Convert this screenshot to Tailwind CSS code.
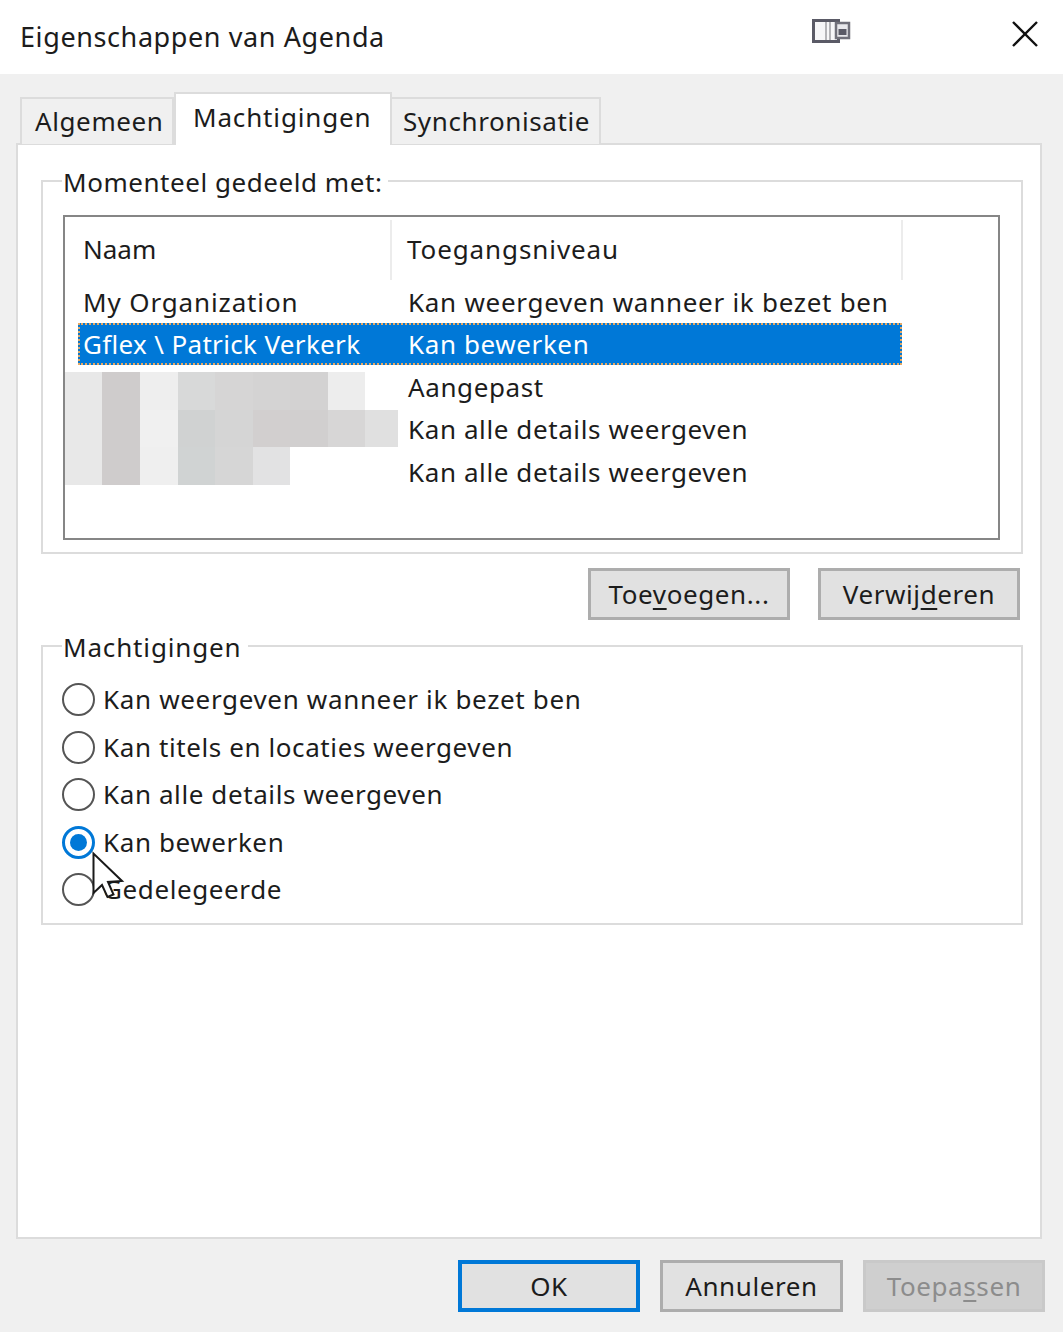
<!DOCTYPE html>
<html lang="nl">
<head>
    <meta charset="UTF-8">
    <title>Eigenschappen van Agenda</title>
    <script src="https://cdn.jsdelivr.net/npm/@tailwindcss/browser@4"></script>
</head>
<body class="bg-[#f0f0f0]">
<div class="relative w-[1063px] h-[1332px] overflow-hidden font-['Noto_Sans','Open_Sans',sans-serif] text-[26px] tracking-[0.6px] text-[#1c1c1c]">

    <!-- Title bar -->
    <div class="h-[74px] bg-white flex items-center pl-[20px] pr-[24px]">
        <span class="text-[27px] leading-none -mt-[2px]">Eigenschappen van Agenda</span>
        <svg class="ml-auto -mt-[12px]" width="40" height="26" viewBox="0 0 40 26">
            <rect x="2.5" y="2.5" width="25" height="21" fill="#f6f6f8" stroke="#5a5a66" stroke-width="3"/>
            <path d="M15 4v18M19 4v18" stroke="#b4b4b8" stroke-width="2"/>
            <rect x="25" y="5" width="13" height="15" fill="#e8e8ec" stroke="#70707a" stroke-width="2.5"/>
            <rect x="27.5" y="11" width="8" height="6" fill="#5a5a66"/>
        </svg>
        <svg class="ml-[160px] -mt-[6px]" width="28" height="28" viewBox="0 0 28 28">
            <path d="M2 2L26 26M26 2L2 26" stroke="#111" stroke-width="2.4"/>
        </svg>
    </div>

    <!-- Tabs -->
    <div class="flex items-end h-[51px] mt-[19px] pl-[20px] relative z-10 -mb-[1px]">
        <div class="w-[154px] h-[47px] bg-[#f0f0f0] border-2 border-b-0 border-[#dcdcdc] pl-[13px] flex items-center">Algemeen</div>
        <div class="w-[218px] h-[53px] -mb-[1px] bg-white border-2 border-b-0 border-[#dcdcdc] pl-[17px] pb-[4px] flex items-center tracking-[0.85px]">Machtigingen</div>
        <div class="w-[209px] h-[47px] bg-[#f0f0f0] border-2 border-b-0 border-l-0 border-[#dcdcdc] pl-[11px] flex items-center">Synchronisatie</div>
    </div>

    <!-- Panel -->
    <div class="ml-[16px] w-[1026px] h-[1096px] bg-white border-2 border-[#dcdcdc] pt-[35px] pl-[23px]">

        <!-- Momenteel gedeeld met -->
        <div class="w-[982px] h-[374px] border-2 border-[#dcdcdc] pl-[20px]">
            <div class="w-fit -mt-[16px] -ml-[1px] h-[32px] leading-[32px] bg-white px-[1px] pr-[6px] tracking-[0.55px]">Momenteel gedeeld met:</div>
            <div class="relative mt-[17px] w-[937px] h-[325px] border-2 border-[#868686]">
                <div class="flex h-[65px] items-center">
                    <div class="w-[327px] h-[60px] pl-[18px] flex items-center border-r-2 border-[#ececec] tracking-[0px]">Naam</div>
                    <div class="w-[511px] h-[60px] pl-[15px] flex items-center border-r-2 border-[#ececec] tracking-[0.9px]">Toegangsniveau</div>
                </div>
                <div class="flex h-[41px] items-center pl-[18px]">
                    <span class="w-[325px] tracking-[0.87px]">My Organization</span><span class="tracking-[0.72px]">Kan weergeven wanneer ik bezet ben</span>
                </div>
                <div class="flex h-[42px] items-center ml-[13px] pl-[5px] w-[824px] bg-[#0078d7] text-white outline-2 -outline-offset-2 outline-dotted outline-[#e8a860]">
                    <span class="w-[325px] tracking-[0.34px]">Gflex \ Patrick Verkerk</span><span>Kan bewerken</span>
                </div>
                <div class="flex h-[43px] items-center pl-[343px] pt-[1px]">Aangepast</div>
                <div class="flex h-[42px] items-center pl-[343px]">Kan alle details weergeven</div>
                <div class="flex h-[43px] items-center pl-[343px] pt-[1px]">Kan alle details weergeven</div>

                <!-- Censored names -->
                <div class="absolute left-0 top-[155px] w-[333px] flex flex-col">
                    <div class="flex h-[38px]">
                        <div class="w-[37px] bg-[#e8e8e8]"></div><div class="w-[38px] bg-[#cfcccc]"></div><div class="w-[38px] bg-[#eeeeee]"></div><div class="w-[37px] bg-[#d8d9d9]"></div><div class="w-[38px] bg-[#d6d5d5]"></div><div class="w-[37px] bg-[#d4d3d3]"></div><div class="w-[38px] bg-[#d3d2d2]"></div><div class="w-[37px] bg-[#ededed]"></div>
                    </div>
                    <div class="flex h-[37px]">
                        <div class="w-[37px] bg-[#e8e8e8]"></div><div class="w-[38px] bg-[#cfcccc]"></div><div class="w-[38px] bg-[#f0f0f0]"></div><div class="w-[37px] bg-[#d0d2d2]"></div><div class="w-[38px] bg-[#d5d5d5]"></div><div class="w-[37px] bg-[#d2cfcf]"></div><div class="w-[38px] bg-[#d1cfcf]"></div><div class="w-[37px] bg-[#d7d6d6]"></div><div class="w-[33px] bg-[#e0e0e0]"></div>
                    </div>
                    <div class="flex h-[38px]">
                        <div class="w-[37px] bg-[#e8e8e8]"></div><div class="w-[38px] bg-[#cfcccc]"></div><div class="w-[38px] bg-[#efefef]"></div><div class="w-[37px] bg-[#d0d3d3]"></div><div class="w-[38px] bg-[#d6d6d6]"></div><div class="w-[37px] bg-[#e2e2e3]"></div>
                    </div>
                </div>
            </div>
        </div>

        <!-- Toevoegen / Verwijderen -->
        <div class="flex justify-end gap-[28px] w-[979px] mt-[14px]">
            <div class="w-[202px] h-[52px] bg-[#e1e1e1] border-[3px] border-[#adadad] flex items-center justify-center"><span>Toe<u class="underline-offset-4">v</u>oegen...</span></div>
            <div class="w-[202px] h-[52px] bg-[#e1e1e1] border-[3px] border-[#adadad] flex items-center justify-center"><span>Verwij<u class="underline-offset-4">d</u>eren</span></div>
        </div>

        <!-- Machtigingen -->
        <div class="mt-[25px] w-[982px] h-[280px] border-2 border-[#dcdcdc] pl-[20px]">
            <div class="w-fit -mt-[16px] -ml-[1px] h-[32px] leading-[32px] bg-white px-[1px] pr-[6px] tracking-[0.85px]">Machtigingen</div>
            <div class="mt-[13px] -ml-[1px] flex flex-col">
                <label class="flex items-center h-[47.5px] gap-[8px] tracking-[0.66px]"><span class="w-[33px] h-[33px] rounded-full border-2 border-[#555555]"></span>Kan weergeven wanneer ik bezet ben</label>
                <label class="flex items-center h-[47.5px] gap-[8px]"><span class="w-[33px] h-[33px] rounded-full border-2 border-[#555555]"></span>Kan titels en locaties weergeven</label>
                <label class="flex items-center h-[47.5px] gap-[8px]"><span class="w-[33px] h-[33px] rounded-full border-2 border-[#555555]"></span>Kan alle details weergeven</label>
                <label class="flex items-center h-[47.5px] gap-[8px]"><span class="w-[33px] h-[33px] rounded-full border-[3px] border-[#0078d7] flex items-center justify-center"><span class="w-[17px] h-[17px] rounded-full bg-[#0078d7]"></span></span>Kan bewerken</label>
                <label class="flex items-center h-[47.5px] gap-[8px]"><span class="w-[33px] h-[33px] rounded-full border-2 border-[#555555]"></span>Gedelegeerde</label>
            </div>
        </div>
    </div>

    <!-- Footer buttons -->
    <div class="flex justify-end gap-[20px] pt-[21px] pr-[18px]">
        <div class="w-[182px] h-[52px] bg-[#e1e1e1] border-4 border-[#0078d7] flex items-center justify-center">OK</div>
        <div class="w-[183px] h-[52px] bg-[#e1e1e1] border-[3px] border-[#adadad] flex items-center justify-center">Annuleren</div>
        <div class="w-[182px] h-[52px] bg-[#cfcfcf] border-[3px] border-[#c9c9c9] text-[#8c8c8c] flex items-center justify-center"><span>Toepa<u class="underline-offset-4">s</u>sen</span></div>
    </div>

    <!-- Mouse cursor -->
    <svg class="absolute left-[90px] top-[850px]" width="36" height="50" viewBox="0 0 36 50">
        <path d="M3.5 3.5V43L12 35L17.5 47L23.5 44.5L18 32L32 31Z" fill="#fff" stroke="#1a1a1a" stroke-width="2"/>
    </svg>
</div>
</body>
</html>
